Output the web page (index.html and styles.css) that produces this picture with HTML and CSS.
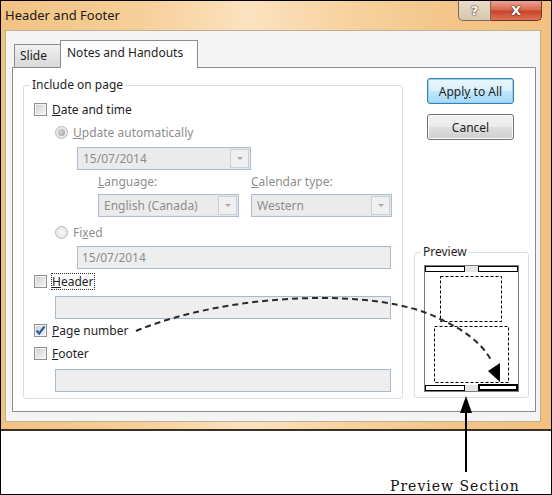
FILE: index.html
```html
<!DOCTYPE html>
<html lang="en">
<head>
    <meta charset="UTF-8">
    <title>Header and Footer</title>
    <link rel="stylesheet" href="styles.css">
</head>
<body>
<div class="page">
    <div class="window">
        <div class="titlebar">
            <span class="title">Header and Footer</span>
            <div class="caption-btns">
                <span class="btn-help">?</span>
                <span class="btn-close">X</span>
            </div>
        </div>
        <div class="client">
            <div class="tabs">
                <span class="tab">Slide</span>
                <span class="tab active">Notes and Handouts</span>
            </div>
            <div class="panel">
                <fieldset class="group include">
                    <legend>Include on page</legend>
                    <div class="row r-date">
                        <span class="checkbox"></span>
                        <span><u>D</u>ate and time</span>
                    </div>
                    <div class="row r-auto off">
                        <span class="radio on"></span>
                        <span><u>U</u>pdate automatically</span>
                    </div>
                    <div class="combo c-date">
                        <span class="val">15/07/2014</span>
                        <span class="arrow"></span>
                    </div>
                    <div class="pair labels off">
                        <span><u>L</u>anguage:</span>
                        <span><u>C</u>alendar type:</span>
                    </div>
                    <div class="pair">
                        <div class="combo">
                            <span class="val">English (Canada)</span>
                            <span class="arrow"></span>
                        </div>
                        <div class="combo">
                            <span class="val">Western</span>
                            <span class="arrow"></span>
                        </div>
                    </div>
                    <div class="row r-fixed off">
                        <span class="radio"></span>
                        <span>Fi<u>x</u>ed</span>
                    </div>
                    <div class="field f-fixed">15/07/2014</div>
                    <div class="row r-header">
                        <span class="checkbox"></span>
                        <span class="focus"><u>H</u>eader</span>
                    </div>
                    <div class="field f-header"></div>
                    <div class="row r-page">
                        <span class="checkbox">
                            <svg width="11" height="11" viewBox="0 0 11 11"><path d="M1.5 5.5 L4.2 8.5 L9.5 1.5" fill="none" stroke="#2a5caa" stroke-width="2.2"/></svg>
                        </span>
                        <span><u>P</u>age number</span>
                    </div>
                    <div class="row r-footer">
                        <span class="checkbox"></span>
                        <span><u>F</u>ooter</span>
                    </div>
                    <div class="field f-footer"></div>
                </fieldset>
                <div class="side">
                    <button class="btn default">Appl<u>y</u> to All</button>
                    <button class="btn cancel">Cancel</button>
                    <fieldset class="group preview">
                        <legend>Preview</legend>
                        <svg class="sheet" width="95" height="127" viewBox="0 0 95 127">
                            <rect x="0.5" y="0.5" width="94" height="126" fill="#fff" stroke="#7d7d7d"/>
                            <rect x="41" y="1" width="13" height="6" fill="#e6e6e6"/>
                            <rect x="41" y="120" width="13" height="6" fill="#e6e6e6"/>
                            <rect x="1.5" y="1.5" width="39" height="5" fill="#fff" stroke="#000"/>
                            <rect x="54.5" y="1.5" width="39" height="5" fill="#fff" stroke="#000"/>
                            <rect x="16.5" y="11.5" width="61" height="45" fill="none" stroke="#000" stroke-dasharray="3 2"/>
                            <rect x="10.5" y="61.5" width="74" height="56" fill="none" stroke="#000" stroke-dasharray="3 2"/>
                            <rect x="1.5" y="120.5" width="39" height="5" fill="#fff" stroke="#000"/>
                            <rect x="55" y="120" width="38" height="5" fill="#fff" stroke="#000" stroke-width="2"/>
                        </svg>
                    </fieldset>
                </div>
            </div>
        </div>
    </div>
    <div class="caption">Preview Section</div>
    <svg class="overlay" width="552" height="495" viewBox="0 0 552 495">
        <path d="M136 331 C230 292 380 287 440 319 C462 329 482 342 492 362" fill="none" stroke="#2b2b2b" stroke-width="2" stroke-dasharray="6 4"/>
        <polygon points="488,371 500,363 500,382" fill="#000"/>
        <line x1="466" y1="472" x2="466" y2="408" stroke="#000" stroke-width="2"/>
        <polygon points="466,396 460,413 472,413" fill="#000"/>
    </svg>
</div>
</body>
</html>
```

FILE: styles.css
```css
*{
    margin:0;
    padding:0;
    box-sizing:border-box;
}
body{
    background:#fff;
    font-family:"Noto Sans","DejaVu Sans",sans-serif;
    font-size:12px;
    color:#1e1e1e;
}
.page{
    position:relative;
    width:552px;
    height:495px;
    border:1px solid #000;
    overflow:hidden;
    background:#fff;
}
/* window frame */
.window{
    height:430px;
    display:flex;
    flex-direction:column;
    padding:0 10px 7px 4px;
    border-bottom:2px solid #3b3227;
    background:linear-gradient(to right,#f2c283 0%,#f6cf98 25%,#fbe2bf 45%,#f7d3a0 62%,#f3c588 82%,#f2c180 100%);
}
.titlebar{
    height:29px;
    display:flex;
    justify-content:space-between;
    align-items:flex-start;
}
.title{
    font-size:13px;
    line-height:29px;
    color:#1a1a1a;
}
.caption-btns{
    display:flex;
    margin-right:-1px;
    height:20px;
}
.btn-help,.btn-close{
    height:20px;
    display:flex;
    align-items:center;
    justify-content:center;
    color:#fff;
    font-weight:bold;
    font-family:"DejaVu Sans",sans-serif;
    text-shadow:0 0 2px #3a2a1a,0 0 1px #3a2a1a;
}
.btn-help{
    width:33px;
    font-size:13px;
    border:1px solid #7a6a58;
    border-top:0;
    border-radius:0 0 0 5px;
    background:linear-gradient(#eadcc9,#d8c6ad);
}
.btn-close{
    width:51px;
    font-size:13px;
    border:1px solid #6e3526;
    border-top:0;
    border-left:0;
    border-radius:0 0 5px 0;
    background:linear-gradient(#eba493 0%,#d9664c 48%,#c8412a 52%,#db7356 100%);
}
.client{
    flex:1;
    background:#f4f4f4;
    border:1px solid #bfae95;
    padding:9px 4px 0 6px;
}
/* tabs */
.tabs{
    display:flex;
    align-items:flex-end;
    height:28px;
    margin-left:2px;
    margin-bottom:-1px;
    position:relative;
    z-index:1;
}
.tab{
    width:47px;
    height:23px;
    margin-bottom:1px;
    border:1px solid #898c95;
    border-bottom:0;
    background:linear-gradient(#f2f2f2,#e3e3e3 50%,#d9d9d9);
    line-height:22px;
    padding-left:5px;
}
.tab.active{
    width:138px;
    height:28px;
    margin:0 0 0 -1px;
    background:#fff;
    line-height:24px;
    padding-left:6px;
}
.panel{
    width:524px;
    height:345px;
    background:#fff;
    border:1px solid #898c95;
    display:flex;
    align-items:flex-start;
    gap:11px;
    padding:9px 0 13px 10px;
}
.group{
    border:1px solid #d5dfe5;
    border-radius:3px;
}
.group legend{
    line-height:16px;
    padding:0 2px;
}
.include{
    width:379px;
    padding:5px 10px 6px;
}
.include legend{
    margin-left:-4px;
}
.row{
    display:flex;
    align-items:center;
    gap:5px;
}
.off{
    color:#8d8d8d;
}
.r-date{height:23px;}
.r-auto{height:23px;margin-left:21px;}
.r-fixed{height:29px;margin-left:21px;padding-top:1px;}
.r-header{height:25px;}
.r-page{height:22px;}
.r-footer{height:25px;}
.checkbox{
    width:13px;
    height:13px;
    border:1px solid #8e8f8f;
    background:linear-gradient(135deg,#cfcfcf,#f7f7f7);
    box-shadow:inset 0 0 0 1px #f4f4f4;
    display:flex;
    align-items:center;
    justify-content:center;
}
.radio{
    width:13px;
    height:13px;
    border:1px solid #b9b9b9;
    border-radius:50%;
    background:radial-gradient(circle,#f7f7f7,#e1e1e1);
    display:flex;
    align-items:center;
    justify-content:center;
}
.radio.on::after{
    content:"";
    width:7px;
    height:7px;
    border-radius:50%;
    background:radial-gradient(circle at 40% 40%,#d6d6d6,#9d9d9d);
}
.focus{
    outline:1px dotted #333;
    outline-offset:0;
    line-height:15px;
}
.combo{
    display:flex;
    height:23px;
    border:1px solid #b1bdca;
    background:#ebebeb;
    box-shadow:inset 0 0 0 1px #e1e7ee;
    padding:1px;
}
.combo .val{
    flex:1;
    padding-left:4px;
    line-height:19px;
    color:#8d8d8d;
    white-space:nowrap;
}
.combo .arrow{
    width:19px;
    border:1px solid #c9d0d8;
    background:#f0f0f0;
    display:flex;
    align-items:center;
    justify-content:center;
}
.combo .arrow::after{
    content:"";
    border-left:3px solid transparent;
    border-right:3px solid transparent;
    border-top:3px solid #a9a9a9;
}
.c-date{
    width:174px;
    margin:3px 0 0 43px;
}
.pair{
    display:flex;
    gap:12px;
    margin-left:64px;
}
.pair .combo{
    width:141px;
    height:23px;
}
.labels{
    height:24px;
    line-height:24px;
}
.labels span{
    width:141px;
}
.field{
    height:23px;
    border:1px solid #abbacb;
    background:#eeeeee;
    box-shadow:inset 0 1px 0 #e2eaf3;
    color:#8d8d8d;
    padding-left:4px;
    line-height:21px;
}
.f-fixed{
    width:314px;
    margin-left:43px;
}
.f-header{
    width:336px;
    margin:2px 0 0 21px;
}
.f-footer{
    width:336px;
    margin:3px 0 0 21px;
}
/* right column */
.side{
    width:115px;
    align-self:stretch;
    display:flex;
    flex-direction:column;
}
.btn{
    width:87px;
    height:26px;
    margin-left:13px;
    font-family:inherit;
    font-size:12px;
    color:#1e1e1e;
    border:1px solid #707070;
    border-radius:3px;
    background:linear-gradient(#f2f2f2 0%,#ebebeb 48%,#dddddd 52%,#cfcfcf 100%);
    box-shadow:inset 0 0 0 1px #fbfbfb;
}
.btn.default{
    margin-top:1px;
    border-color:#3c7fb1;
    background:linear-gradient(#eaf6fd 0%,#d9f0fc 48%,#bee6fd 52%,#a7d9f5 100%);
    box-shadow:inset 0 0 0 1px #8fd3f3;
}
.btn.cancel{
    margin-top:10px;
}
.preview{
    margin-top:auto;
    width:115px;
    padding:5px 9px;
}
.preview legend{
    margin-left:-3px;
}
.sheet{
    display:block;
}
/* annotation */
.caption{
    margin:47px 0 0 389px;
    font-family:"DejaVu Serif",serif;
    font-size:14px;
    line-height:16px;
    letter-spacing:1px;
    color:#111;
}
.overlay{
    position:absolute;
    top:-1px;
    left:-1px;
    pointer-events:none;
}
```
